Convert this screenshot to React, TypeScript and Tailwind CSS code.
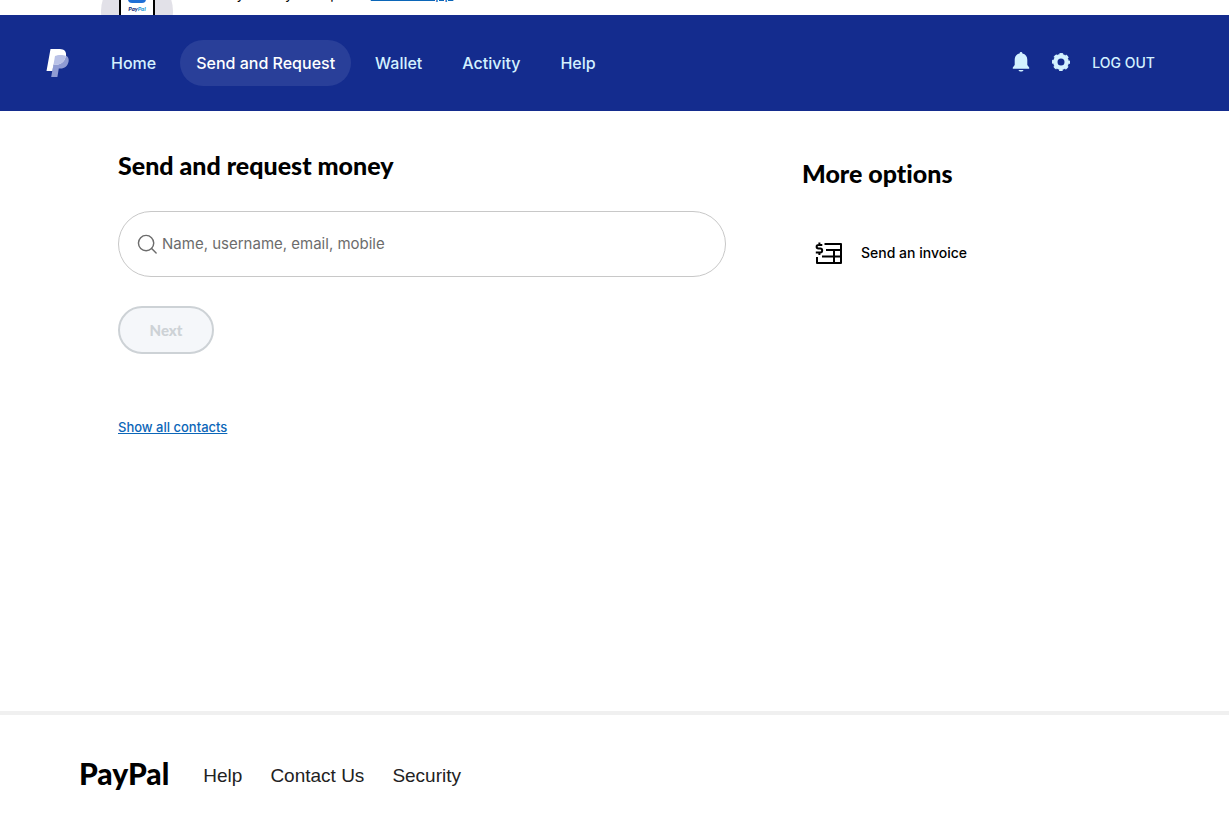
import { useState } from "react"

interface NavItem {
  label: string;
  active?: boolean;
}

const navItems: NavItem[] = [
  { label: "Home" },
  { label: "Send and Request", active: true },
  { label: "Wallet" },
  { label: "Activity" },
  { label: "Help" },
]

const footerLinks = ["Help", "Contact Us", "Security"]

function PayPalMark() {
  return (
    <svg width="24" height="30" viewBox="0 0 24 30" aria-hidden="true">
      <path d="M9 7h8c4 0 6.300 2.700 5.600 6.500C21.800 18 18.600 20.500 14.500 20.500h-1.700L11.400 29H5.200z" fill="#8f9bd3" />
      <path d="M4.500 1h9.300c4.500 0 6.800 2.800 6.200 6.400C19 13.400 15 16.500 10.300 16.500H7.500L6.300 23H.5z" fill="#fff" />
      <path d="M9 8C11 6.800 16.500 6.300 19.900 7.900 18.600 13.900 14.800 16.500 10.300 16.500H7.500z" fill="#b9c1e6" />
    </svg>
  )
}

function BellIcon() {
  return (
    <svg width="18" height="22" viewBox="0 0 18 22" fill="currentColor" aria-hidden="true">
      <path d="M9 0c.8 0 1.400.6 1.400 1.400C13.600 2 15.300 4.500 15.300 7.700V13l1.900 2.400V16.700H.8V15.400L2.700 13V7.700C2.700 4.500 4.400 2 7.600 1.400 7.600.6 8.200 0 9 0z" />
      <path d="M6.500 18h5c-.4 1-1.300 1.500-2.500 1.500S6.900 19 6.500 18z" />
    </svg>
  )
}

function GearIcon() {
  return (
    <svg width="20" height="20" viewBox="0 0 20 20" fill="none" aria-hidden="true">
      <circle cx="10" cy="9" r="5.700" stroke="currentColor" strokeWidth="4.400" />
      <circle cx="10" cy="9" r="7.600" stroke="currentColor" strokeWidth="2.800" strokeDasharray="3.400 2.569" strokeDashoffset="1.700" />
    </svg>
  )
}

function SearchIcon() {
  return (
    <svg width="22" height="22" viewBox="0 0 22 22" fill="none" stroke="currentColor" strokeWidth="1.500" strokeLinecap="round" aria-hidden="true">
      <circle cx="9.500" cy="10" r="8" />
      <path d="M15.300 15.800 20 20.500" />
    </svg>
  )
}

function InvoiceIcon() {
  return (
    <svg width="28" height="24" viewBox="0 0 28 24" fill="none" stroke="currentColor" strokeWidth="2" strokeLinejoin="round" aria-hidden="true">
      <path d="M9.500 3H26v19H2v-6M11 9h15M7 15.500h19M19 9v13" />
      <path d="M7.300 4H3.500C1 4 1 7.500 3.500 7.500h1.800c2.500 0 2.500 4 0 4H.8M4.400 1.500V4M4.400 11.500V14" />
    </svg>
  )
}

function AppBanner() {
  return (
    <div className="flex h-[15px] items-end overflow-hidden pl-[101px]">
      <div className="flex h-[72px] w-[72px] shrink-0 translate-y-8 items-start justify-center rounded-full bg-[#e2e1e8]">
        <div className="flex h-[72px] w-9 flex-col items-center border-x-2 border-black bg-white pt-[22px]">
          <div className="h-[6px] w-[18px] shrink-0 rounded-b bg-[#1f6fd6]" />
          <span className="font-['Lato'] text-[6px] leading-3 font-black text-[#14307c] italic">
            Pay<span className="text-[#2b9bd8]">Pal</span>
          </span>
        </div>
      </div>
      <p className="mb-[11px] ml-4 text-sm leading-5 whitespace-nowrap">
        It's easy to stay on top.
        <a href="#app" className="ml-7 text-[15px] text-[#0b66b8] underline">Get the app</a>
      </p>
    </div>
  )
}

function Header() {
  return (
    <header className="flex h-24 items-center bg-[#142c8e] pr-[74px] pl-[46px] text-[#d3f1ff]">
      <a href="#home" aria-label="PayPal">
        <PayPalMark />
      </a>
      <nav className="ml-[25px] flex gap-2">
        {navItems.map((item) => (
          <a
            key={item.label}
            href={`#${item.label}`}
            className={`rounded-full px-4 text-base leading-[46px] font-medium whitespace-nowrap ${item.active ? "bg-[#293f99] text-white" : ""}`}
          >
            {item.label}
          </a>
        ))}
      </nav>
      <div className="ml-auto flex items-center gap-[21px]">
        <button type="button" aria-label="Notifications"><BellIcon /></button>
        <button type="button" aria-label="Settings"><GearIcon /></button>
        <a href="#logout" className="text-sm font-medium whitespace-nowrap">LOG OUT</a>
      </div>
    </header>
  )
}

export default function App() {
  const [recipient, setRecipient] = useState("")

  return (
    <div className="flex min-h-screen flex-col bg-white font-['Inter',sans-serif] text-black">
      <AppBanner />
      <Header />

      <main className="flex flex-1 gap-[76px] px-[118px] pt-[38px]">
        <section className="flex-[608]">
          <h1 className="font-['Lato',sans-serif] text-[25px] leading-8 font-black">Send and request money</h1>
          <form onSubmit={(e) => e.preventDefault()}>
            <label className="mt-[30px] flex h-[66px] items-center gap-1 rounded-full border border-[#c8c8c8] px-[18px] text-[#6c6c6c]">
              <SearchIcon />
              <input
                type="text"
                aria-label="Name, username, email, mobile"
                placeholder="Name, username, email, mobile"
                value={recipient}
                onChange={(e) => setRecipient(e.target.value)}
                className="w-full text-[15px] outline-none placeholder:text-[#6c6c6c]"
              />
            </label>
            <button
              type="submit"
              disabled={!recipient}
              className="mt-[29px] h-12 w-24 rounded-full border-2 border-[#cdd2d6] bg-[#f5f7fa] font-['Lato',sans-serif] text-[15px] font-black text-[#cdd2d6]"
            >
              Next
            </button>
          </form>
          <a href="#contacts" className="mt-16 inline-block text-[13px] font-medium text-[#0b66b8] underline">Show all contacts</a>
        </section>

        <aside className="flex-[309] pt-2">
          <h2 className="font-['Lato',sans-serif] text-[25px] leading-8 font-black [font-variant-ligatures:none]">More options</h2>
          <a href="#invoice" className="mt-[52px] ml-[13px] flex items-center gap-[18px] text-sm font-medium">
            <InvoiceIcon />
            Send an invoice
          </a>
        </aside>
      </main>

      <footer className="flex h-[117px] items-center border-t-4 border-[#f0f0f0] pt-[10px] pl-[79px]">
        <a href="#home" className="pb-2 font-['Lato',sans-serif] text-3xl font-black">PayPal</a>
        <nav className="ml-[34px] flex gap-7 font-['Liberation_Sans',sans-serif] text-[19px] text-[#222]">
          {footerLinks.map((link) => (
            <a key={link} href={`#${link}`}>{link}</a>
          ))}
        </nav>
      </footer>
    </div>
  )
}
